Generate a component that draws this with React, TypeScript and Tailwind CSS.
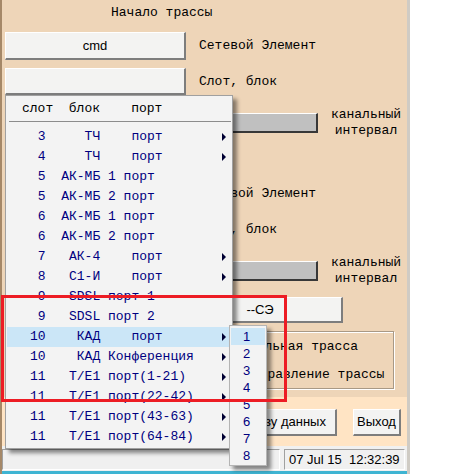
import React from "react";

const mono = "font-['Liberation_Mono','Courier_New',monospace] text-[13px]";
const sans = "font-['Liberation_Sans',Arial,sans-serif] text-[13px]";

const rows: { text: string; sub: boolean }[] = [
  { text: " 3     ТЧ    порт", sub: true },
  { text: " 4     ТЧ    порт", sub: true },
  { text: " 5  АК-МБ 1 порт", sub: false },
  { text: " 5  АК-МБ 2 порт", sub: false },
  { text: " 6  АК-МБ 1 порт", sub: false },
  { text: " 6  АК-МБ 2 порт", sub: false },
  { text: " 7   АК-4    порт", sub: true },
  { text: " 8   С1-И    порт", sub: true },
  { text: " 9   SDSL порт 1", sub: false },
  { text: " 9   SDSL порт 2", sub: false },
  { text: "10    КАД    порт", sub: true },
  { text: "10    КАД Конференция", sub: true },
  { text: "11   T/E1 порт(1-21)", sub: true },
  { text: "11   T/E1 порт(22-42)", sub: true },
  { text: "11   T/E1 порт(43-63)", sub: true },
  { text: "11   T/E1 порт(64-84)", sub: true },
];

const HIGHLIGHT = 10;

function RaisedButton({ className = "", children }: { className?: string; children?: React.ReactNode }) {
  return (
    <div
      className={`flex items-center justify-center bg-[#f3f3f2] border-t border-l border-t-white border-l-white border-b-2 border-r-2 border-b-[#7d7d7d] border-r-[#7d7d7d] ${sans} text-black ${className}`}
    >
      {children}
    </div>
  );
}

function GrayBar() {
  return (
    <div className="w-[313px] h-[20px] bg-[#c0c0c0] border-t border-t-white border-b-2 border-r-2 border-b-[#383838] border-r-[#383838]" />
  );
}

function TraceGroup({ title }: { title: string }) {
  return (
    <div className="flex flex-col">
      <div className={`h-[26px] leading-[26px] pl-[106px] ${mono} text-black whitespace-pre`}>{title}</div>
      <div className="flex items-center mt-[6px] h-[28px]">
        <RaisedButton className="w-[181px] h-[28px]">cmd</RaisedButton>
        <span className={`ml-[13px] ${mono} text-black`}>Сетевой Элемент</span>
      </div>
      <div className="flex items-center mt-[8px] h-[27px]">
        <RaisedButton className="w-[181px] h-[27px]" />
        <span className={`ml-[13px] ${mono} text-black`}>Слот, блок</span>
      </div>
      <div className="flex items-center mt-[18px] h-[20px]">
        <GrayBar />
        <div className={`ml-[12px] w-[72px] text-center leading-4 ${mono} text-black`}>
          канальный
          <br />
          интервал
        </div>
      </div>
    </div>
  );
}

function PopupMenu() {
  return (
    <div className="absolute left-[5px] top-[95px] w-[228px] h-[354px] flex flex-col bg-[#f3f3f3] border border-[#a0a0a0] shadow-[4px_4px_4px_rgba(0,0,0,0.45)]">
      <div className={`h-[25px] leading-[26px] pl-[16px] ${mono} text-black whitespace-pre`}>слот  блок    порт</div>
      <div className="h-px ml-[3px] mr-[1px] bg-[#8c8c8c]" />
      <div className="h-[5px]" />
      {rows.map((r, i) => (
        <div
          key={i}
          className={`flex items-center h-[20px] mx-px ${i === HIGHLIGHT ? "bg-[#cbe6f7]" : ""}`}
        >
          <span className={`pl-[23px] ${mono} text-[#000080] whitespace-pre`}>{r.text}</span>
          {r.sub && (
            <span className="ml-auto mr-[5px] w-0 h-0 border-y-[4px] border-y-transparent border-l-[4px] border-l-[#000033]" />
          )}
        </div>
      ))}
    </div>
  );
}

function SubMenu() {
  return (
    <div className="absolute left-[229px] top-[325px] w-[38px] h-[141px] flex flex-col pt-[2px] bg-[#f3f3f3] border border-[#b4b4b4] shadow-[4px_4px_4px_rgba(0,0,0,0.45)]">
      {[1, 2, 3, 4, 5, 6, 7, 8].map((n) => (
        <div
          key={n}
          className={`h-[17px] leading-[17px] mx-px pl-[12px] ${sans} text-[#000080] ${n === 1 ? "bg-[#cbe6f7]" : ""}`}
        >
          {n}
        </div>
      ))}
    </div>
  );
}

export default function App() {
  return (
    <div className="relative w-[460px] h-[474px] bg-white overflow-hidden">
      <div className="flex flex-col w-[410px] h-full border-l-2 border-l-[#a58868] border-r-[3px] border-r-[#cfcbc4]">
        {/* upper tan panel */}
        <div className="flex flex-col h-[397px] bg-[#eed5b8] pl-[3px]">
          <TraceGroup title="Начало трассы" />
          <div className="mt-[15px]">
            <TraceGroup title="Конец трассы" />
          </div>
          <RaisedButton className="mt-[16px] ml-[173px] w-[165px] h-[26px]">--СЭ</RaisedButton>
          <div className="mt-[8px] ml-[173px] w-[216px] h-[58px] flex flex-col pt-[7px] border border-[#a99985] shadow-[inset_1px_1px_0_#fff,1px_1px_0_#fff]">
            <div className={`h-[16px] leading-4 pl-[62px] ${mono} text-black whitespace-pre`}>Реальная трасса</div>
            <div className={`mt-[12px] h-[16px] leading-4 pl-[65px] ${mono} text-black whitespace-pre`}>Направление трассы</div>
          </div>
        </div>
        {/* lower peach panel */}
        <div className="flex h-[49px] bg-[#ffe4c4] pt-[12px]">
          <RaisedButton className="ml-[169px] w-[166px] h-[27px] whitespace-pre">Записать в базу данных</RaisedButton>
          <RaisedButton className="ml-[16px] w-[48px] h-[27px]">Выход</RaisedButton>
        </div>
        {/* status bar */}
        <div className="flex h-[25px] bg-[#f0f0f0] pt-[3px]">
          <div className="w-[278px] h-[21px] border-t border-l border-t-[#a0a0a0] border-l-[#a0a0a0] border-b border-r border-b-white border-r-white" />
          <div
            className={`ml-[4px] w-[121px] h-[21px] pl-[4px] leading-[19px] border-t border-l border-t-[#a0a0a0] border-l-[#a0a0a0] border-b border-r border-b-white border-r-white ${sans} text-black whitespace-pre`}
          >
            07 Jul 15  12:32:39
          </div>
        </div>
        <div className="h-[3px] bg-[#3fb4d2]" />
      </div>

      <PopupMenu />
      <SubMenu />
      <div className="absolute left-[1px] top-[295px] w-[286px] h-[107px] border-[3px] border-[#ed1c24]" />
    </div>
  );
}
